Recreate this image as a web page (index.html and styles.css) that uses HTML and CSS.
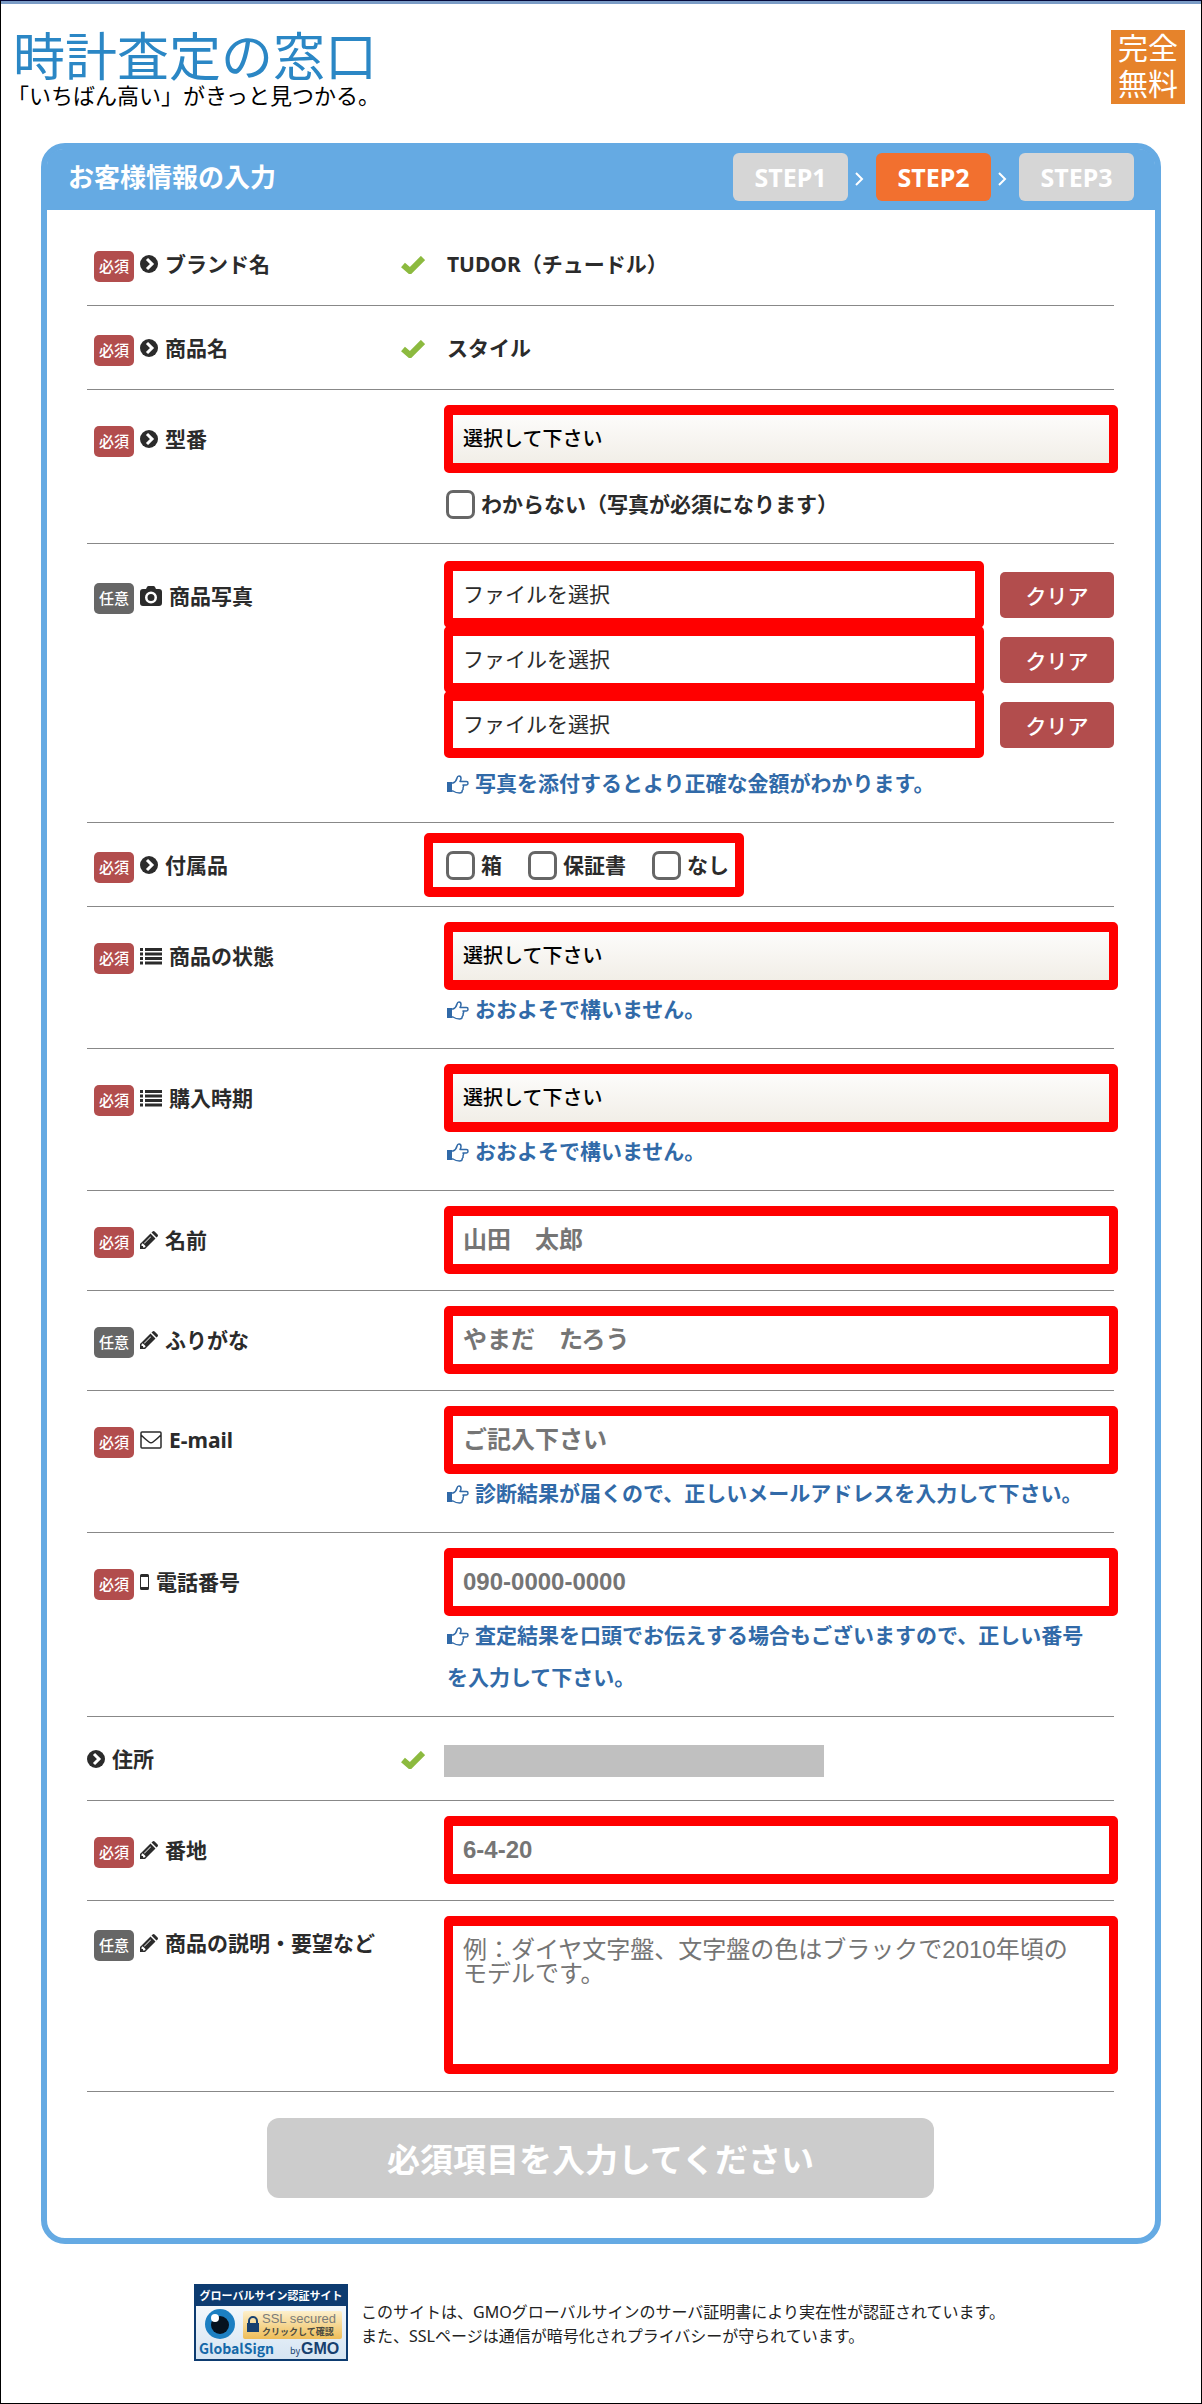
FILE: index.html
```html
<!DOCTYPE html>
<html lang="ja">
<head>
    <meta charset="UTF-8">
    <meta name="viewport" content="width=device-width, initial-scale=1.0">
    <title>時計査定の窓口</title>
    <link rel="stylesheet" href="styles.css">
</head>
<body>
    <svg class="sprite" aria-hidden="true">
        <symbol id="icon-arrow" viewBox="0 0 18 18">
            <circle cx="9" cy="9" r="9" fill="currentColor"/>
            <path d="M7 4l5 5-5 5" fill="none" stroke="#fff" stroke-width="3"/>
        </symbol>
        <symbol id="icon-check" viewBox="0 0 24 18">
            <path d="M2 9l7 6L22 2" fill="none" stroke="currentColor" stroke-width="6"/>
        </symbol>
        <symbol id="icon-camera" viewBox="0 0 22 20">
            <path fill="currentColor" fill-rule="evenodd" d="M3 3h3l1-2q.5-1 1.500-1h5q1 0 1.500 1l1 2h3q3 0 3 3v11q0 3-3 3H3q-3 0-3-3V6q0-3 3-3zM11 5.500a6 6 0 1 0 0 12a6 6 0 0 0 0-12zM11 8a3.500 3.500 0 1 1 0 7a3.500 3.500 0 0 1 0-7z"/>
        </symbol>
        <symbol id="icon-list" viewBox="0 0 22 18">
            <path fill="currentColor" d="M0 1h3v3H0zM5 1h17v3H5zM0 5.500h3v3H0zM5 5.500h17v3H5zM0 10h3v3H0zM5 10h17v3H5zM0 14.500h3v3H0zM5 14.500h17v3H5z"/>
        </symbol>
        <symbol id="icon-pencil" viewBox="0 0 18 18">
            <path fill="currentColor" fill-rule="evenodd" d="M0 18v-5L10.500 2.500l5 5L5 18zM1.500 13.500v1.500H3v1.500h1.500L5.700 15.300 2.700 12.300zM4 12l.5.500 6.500-6.500-.5-.5zM11.500 1.500L12.600.4q1-.8 2 0l3 3q.8 1 0 2L16.500 6.500z"/>
        </symbol>
        <symbol id="icon-mail" viewBox="0 0 22 18">
            <path fill="none" stroke="currentColor" stroke-width="1.500" d="M2 1h18q1 0 1 1v14q0 1-1 1H2q-1 0-1-1V2q0-1 1-1zM1 4q4 4 8 7 2 1.500 4 0 4-3 8-7"/>
        </symbol>
        <symbol id="icon-mobile" viewBox="0 0 9 18">
            <path fill="currentColor" fill-rule="evenodd" d="M1.500 1h6q1.500 0 1.500 1.500v13q0 1.500-1.500 1.500h-6Q0 17 0 15.500v-13Q0 1 1.500 1zM1 4v10h7V4z"/>
        </symbol>
        <symbol id="icon-hand" viewBox="0 0 22 19">
            <path fill="currentColor" d="M0 7h5v10H0z"/>
            <path fill="none" stroke="currentColor" stroke-width="1.500" stroke-linejoin="round" d="M1 8h5q3-1 4-5 .5-2 2-2 2 0 2 2.500 0 1.500-1 3h6.500q1.500 0 1.500 1.700t-1.500 1.700H16q1.200 1.200 0 3 .6 1.500-.8 2.600.2 2.500-2.700 2.500Q9 18 6 16H1z"/>
        </symbol>
        <symbol id="icon-next" viewBox="0 0 10 16">
            <path d="M2 2l6 6-6 6" fill="none" stroke="currentColor" stroke-width="2"/>
        </symbol>
    </svg>

    <header class="site-header">
        <div class="brand">
            <h1 class="logo">時計査定の窓口</h1>
            <p class="tagline">「いちばん高い」がきっと見つかる。</p>
        </div>
        <p class="free">完全<br>無料</p>
    </header>

    <form class="form">
        <div class="form-header">
            <h2 class="form-title">お客様情報の入力</h2>
            <div class="steps">
                <span class="step">STEP1</span>
                <svg class="next"><use href="#icon-next"/></svg>
                <span class="step current">STEP2</span>
                <svg class="next"><use href="#icon-next"/></svg>
                <span class="step">STEP3</span>
            </div>
        </div>

        <div class="form-body">
            <div class="row plain">
                <div class="label">
                    <span class="tag">必須</span>
                    <svg class="icon"><use href="#icon-arrow"/></svg>
                    <span>ブランド名</span>
                    <svg class="check"><use href="#icon-check"/></svg>
                </div>
                <div class="field"><p class="value">TUDOR（チュードル）</p></div>
            </div>

            <div class="row plain">
                <div class="label">
                    <span class="tag">必須</span>
                    <svg class="icon"><use href="#icon-arrow"/></svg>
                    <span>商品名</span>
                    <svg class="check"><use href="#icon-check"/></svg>
                </div>
                <div class="field"><p class="value">スタイル</p></div>
            </div>

            <div class="row">
                <div class="label">
                    <span class="tag">必須</span>
                    <svg class="icon"><use href="#icon-arrow"/></svg>
                    <label for="model">型番</label>
                </div>
                <div class="field">
                    <select class="control select" id="model"><option>選択して下さい</option></select>
                    <label class="tick below"><input type="checkbox">わからない（写真が必須になります）</label>
                </div>
            </div>

            <div class="row photos">
                <div class="label">
                    <span class="tag optional">任意</span>
                    <svg class="icon wide"><use href="#icon-camera"/></svg>
                    <span>商品写真</span>
                </div>
                <div class="field">
                    <div class="file-row">
                        <label class="control file"><input type="file">ファイルを選択</label>
                        <button type="button" class="clear">クリア</button>
                    </div>
                    <div class="file-row">
                        <label class="control file"><input type="file">ファイルを選択</label>
                        <button type="button" class="clear">クリア</button>
                    </div>
                    <div class="file-row">
                        <label class="control file"><input type="file">ファイルを選択</label>
                        <button type="button" class="clear">クリア</button>
                    </div>
                    <p class="hint"><svg class="hand"><use href="#icon-hand"/></svg>写真を添付するとより正確な金額がわかります。</p>
                </div>
            </div>

            <div class="row plain">
                <div class="label">
                    <span class="tag">必須</span>
                    <svg class="icon"><use href="#icon-arrow"/></svg>
                    <span>付属品</span>
                </div>
                <div class="field">
                    <div class="ticks">
                        <label class="tick"><input type="checkbox">箱</label>
                        <label class="tick"><input type="checkbox">保証書</label>
                        <label class="tick"><input type="checkbox">なし</label>
                    </div>
                </div>
            </div>

            <div class="row">
                <div class="label">
                    <span class="tag">必須</span>
                    <svg class="icon wide"><use href="#icon-list"/></svg>
                    <label for="condition">商品の状態</label>
                </div>
                <div class="field">
                    <select class="control select" id="condition"><option>選択して下さい</option></select>
                    <p class="hint"><svg class="hand"><use href="#icon-hand"/></svg>おおよそで構いません。</p>
                </div>
            </div>

            <div class="row">
                <div class="label">
                    <span class="tag">必須</span>
                    <svg class="icon wide"><use href="#icon-list"/></svg>
                    <label for="bought">購入時期</label>
                </div>
                <div class="field">
                    <select class="control select" id="bought"><option>選択して下さい</option></select>
                    <p class="hint"><svg class="hand"><use href="#icon-hand"/></svg>おおよそで構いません。</p>
                </div>
            </div>

            <div class="row">
                <div class="label">
                    <span class="tag">必須</span>
                    <svg class="icon"><use href="#icon-pencil"/></svg>
                    <label for="name">名前</label>
                </div>
                <div class="field"><input class="control" type="text" id="name" placeholder="山田　太郎"></div>
            </div>

            <div class="row">
                <div class="label">
                    <span class="tag optional">任意</span>
                    <svg class="icon"><use href="#icon-pencil"/></svg>
                    <label for="kana">ふりがな</label>
                </div>
                <div class="field"><input class="control" type="text" id="kana" placeholder="やまだ　たろう"></div>
            </div>

            <div class="row">
                <div class="label">
                    <span class="tag">必須</span>
                    <svg class="icon wide"><use href="#icon-mail"/></svg>
                    <label for="email">E-mail</label>
                </div>
                <div class="field">
                    <input class="control" type="email" id="email" placeholder="ご記入下さい">
                    <p class="hint"><svg class="hand"><use href="#icon-hand"/></svg>診断結果が届くので、正しいメールアドレスを入力して下さい。</p>
                </div>
            </div>

            <div class="row">
                <div class="label">
                    <span class="tag">必須</span>
                    <svg class="icon narrow"><use href="#icon-mobile"/></svg>
                    <label for="tel">電話番号</label>
                </div>
                <div class="field">
                    <input class="control" type="tel" id="tel" placeholder="090-0000-0000">
                    <p class="hint"><svg class="hand"><use href="#icon-hand"/></svg>査定結果を口頭でお伝えする場合もございますので、正しい番号を入力して下さい。</p>
                </div>
            </div>

            <div class="row plain">
                <div class="label no-tag">
                    <svg class="icon"><use href="#icon-arrow"/></svg>
                    <span>住所</span>
                    <svg class="check"><use href="#icon-check"/></svg>
                </div>
                <div class="field"><div class="masked"></div></div>
            </div>

            <div class="row">
                <div class="label">
                    <span class="tag">必須</span>
                    <svg class="icon"><use href="#icon-pencil"/></svg>
                    <label for="street">番地</label>
                </div>
                <div class="field"><input class="control" type="text" id="street" placeholder="6-4-20"></div>
            </div>

            <div class="row plain note">
                <div class="label">
                    <span class="tag optional">任意</span>
                    <svg class="icon"><use href="#icon-pencil"/></svg>
                    <label for="note">商品の説明・要望など</label>
                </div>
                <div class="field"><textarea class="control textarea" id="note" placeholder="例：ダイヤ文字盤、文字盤の色はブラックで2010年頃のモデルです。"></textarea></div>
            </div>

            <button type="submit" class="submit" disabled>必須項目を入力してください</button>
        </div>
    </form>

    <footer class="site-footer">
        <svg class="seal" viewBox="0 0 154 77" role="img" aria-label="GlobalSign">
            <defs>
                <linearGradient id="gold" x1="0" x2="0" y1="0" y2="1">
                    <stop offset="0" stop-color="#fdf0cd"/>
                    <stop offset="1" stop-color="#eebd58"/>
                </linearGradient>
                <linearGradient id="sky" x1="0" x2="0" y1="0" y2="1">
                    <stop offset="0" stop-color="#fff"/>
                    <stop offset="1" stop-color="#d5e4f2"/>
                </linearGradient>
            </defs>
            <rect x="1" y="1" width="152" height="75" fill="url(#sky)" stroke="#0d3b70" stroke-width="2"/>
            <rect width="154" height="22" fill="#0d3b70"/>
            <text x="77" y="16" class="seal-head">グローバルサイン認証サイト</text>
            <circle cx="26" cy="40" r="15" fill="#1c7fc2"/>
            <circle cx="26" cy="41" r="9" fill="#06121f"/>
            <circle cx="21" cy="34" r="4" fill="#fff"/>
            <rect x="49" y="27" width="99" height="28" rx="2" fill="url(#gold)"/>
            <path d="M55 40v-3a4 4 0 0 1 8 0v3" fill="none" stroke="#17406f" stroke-width="2"/>
            <rect x="53" y="39" width="12" height="9" fill="#17406f"/>
            <text x="68" y="39" class="seal-ssl">SSL secured</text>
            <text x="68" y="51" class="seal-click">クリックして確認</text>
            <text x="5" y="70" class="seal-name">GlobalSign</text>
            <text x="96" y="70" class="seal-by">by</text>
            <text x="107" y="70" class="seal-gmo">GMO</text>
        </svg>
        <p class="ssl-note">このサイトは、GMOグローバルサインのサーバ証明書により実在性が認証されています。<br>また、SSLページは通信が暗号化されプライバシーが守られています。</p>
    </footer>
</body>
</html>
```

FILE: styles.css
```css
* {
    box-sizing: border-box;
}

body {
    margin: 0;
    min-height: 100vh;
    border: 1px solid #000;
    border-top-color: #06093a;
    background-color: #fff;
    color: #2b2b2b;
    font-family: "Noto Sans", "Noto Sans CJK JP", sans-serif;
    font-size: 21px;
    line-height: 42px;
}

h1, h2, p {
    margin: 0;
}

.sprite {
    display: none;
}

.site-header {
    display: flex;
    justify-content: space-between;
    align-items: flex-start;
    padding: 26px 16px 35px 6px;
    border-top: 3px solid #7b9cc6;
}

.logo {
    padding-left: 6px;
    color: #2b87c5;
    font-size: 52px;
    line-height: 52px;
    font-weight: 400;
}

.tagline {
    color: #000;
    font-size: 22px;
    line-height: 26px;
}

.free {
    width: 74px;
    height: 74px;
    background-color: #e6832b;
    color: #fff;
    font-size: 30px;
    line-height: 36px;
    text-align: center;
}

.form {
    margin: 0 40px;
    border: 6px solid #65aae3;
    border-radius: 24px;
}

.form-header {
    display: flex;
    justify-content: space-between;
    align-items: center;
    height: 61px;
    padding: 0 21px 5px;
    border-radius: 16px 16px 0 0;
    background-color: #65aae3;
    color: #fff;
}

.form-title {
    font-size: 26px;
    line-height: 40px;
    font-weight: 700;
}

.steps {
    display: flex;
    align-items: center;
}

.step {
    width: 115px;
    border-radius: 6px;
    background-color: #d6d6d6;
    font-size: 25px;
    line-height: 48px;
    font-weight: 700;
    text-align: center;
}

.current {
    background-color: #f2702f;
}

.next {
    width: 10px;
    height: 16px;
    margin: 4px 12px 0 6px;
}

.form-body {
    padding: 12px 41px 40px 40px;
}

.row {
    display: grid;
    grid-template-columns: 357px 1fr;
    padding: 15px 0 16px;
    border-bottom: 1px solid #888;
}

.label {
    display: flex;
    align-items: center;
    height: 68px;
    padding-left: 7px;
    font-weight: 700;
}

.plain .label {
    height: 54px;
}

.no-tag {
    padding-left: 0;
}

.plain {
    padding-bottom: 14px;
}

.photos {
    padding-top: 18px;
}

.note {
    padding-bottom: 17px;
}

.tag {
    width: 40px;
    margin: 4px 6px 0 0;
    border-radius: 5px;
    background-color: #b24d4d;
    color: #fff;
    font-size: 15px;
    line-height: 31px;
    font-weight: 500;
    text-align: center;
}

.optional {
    background-color: #666;
}

.icon {
    width: 18px;
    height: 18px;
    margin-right: 7px;
}

.wide {
    width: 22px;
    height: 20px;
}

.narrow {
    width: 9px;
}

.check {
    width: 24px;
    height: 18px;
    margin: 2px 19px 0 auto;
    color: #8cba3f;
}

.field {
    margin-right: -4px;
}

.value {
    padding-left: 3px;
    line-height: 54px;
    font-weight: 700;
}

.control {
    display: block;
    width: 100%;
    height: 68px;
    padding: 0 10px;
    border: solid #f00;
    border-width: 10px 9px;
    border-radius: 5px;
    background-color: #fff;
    color: #2b2b2b;
    font-family: "Liberation Sans", "Noto Sans CJK JP", sans-serif;
    font-size: 24px;
    font-weight: 700;
}

.control::placeholder {
    color: #757575;
    opacity: 1;
}

.select {
    appearance: none;
    background-image: linear-gradient(#fff, #efebe3);
    background-origin: border-box;
    color: #000;
    font-size: 20px;
    font-weight: 500;
}

.file-row {
    display: flex;
    align-items: center;
    justify-content: space-between;
    height: 65px;
    padding-right: 4px;
}

.file {
    width: 540px;
    height: 67px;
    font-size: 21px;
    font-weight: 400;
    line-height: 47px;
}

.file input {
    position: absolute;
    opacity: 0;
    width: 1px;
    height: 1px;
}

.clear {
    width: 114px;
    height: 46px;
    padding: 0;
    border: none;
    border-radius: 5px;
    background-color: #b24d4d;
    color: #fff;
    font: 500 21px "Noto Sans CJK JP", sans-serif;
}

.textarea {
    height: 158px;
    padding: 12px 28px 12px 10px;
    line-height: 24px;
    font-weight: 400;
    resize: none;
}

.tick {
    display: flex;
    align-items: center;
    font-weight: 700;
}

.tick input {
    appearance: none;
    width: 29px;
    height: 29px;
    margin: 0 6px 0 2px;
    border: 3px solid #666;
    border-radius: 7px;
    background-color: #fff;
}

.below {
    margin: 10px 0 2px;
}

.ticks {
    display: flex;
    gap: 24px;
    width: fit-content;
    height: 64px;
    margin: -5px 0 -5px -20px;
    padding: 0 6px 0 11px;
    border: solid #f00;
    border-width: 10px 9px;
    border-radius: 5px;
}

.hint {
    margin: -2px 0 2px;
    padding: 0 24px 0 3px;
    color: #316aa8;
    font-weight: 700;
}

.hand {
    width: 22px;
    height: 19px;
    margin-right: 6px;
    vertical-align: -3px;
}

.file-row + .hint {
    margin-top: 5px;
}

.masked {
    width: 380px;
    height: 32px;
    margin-top: 13px;
    background-color: #c0c0c0;
}

.submit {
    display: block;
    width: 65%;
    height: 80px;
    margin: 26px auto 0;
    border: none;
    border-radius: 12px;
    background-color: #ccc;
    color: #fff;
    font: 700 33px "Noto Sans CJK JP", sans-serif;
}

.site-footer {
    display: flex;
    gap: 13px;
    padding: 40px 40px 40px 193px;
}

.seal {
    width: 154px;
    height: 77px;
    font-family: "Noto Sans CJK JP", sans-serif;
}

.seal-head {
    fill: #fff;
    font-size: 11px;
    font-weight: 700;
    text-anchor: middle;
}

.seal-ssl {
    fill: #7c7c78;
    font-family: "Liberation Sans", sans-serif;
    font-size: 13px;
}

.seal-click {
    fill: #4a4a40;
    font-size: 9px;
    font-weight: 700;
}

.seal-name {
    fill: #1568a8;
    font-size: 14px;
    font-weight: 700;
}

.seal-by {
    fill: #17406f;
    font-size: 9px;
}

.seal-gmo {
    fill: #17406f;
    font-family: "Liberation Sans", sans-serif;
    font-size: 16px;
    font-weight: 700;
}

.ssl-note {
    padding-top: 16px;
    color: #222;
    font-size: 16px;
    line-height: 24px;
}
```
